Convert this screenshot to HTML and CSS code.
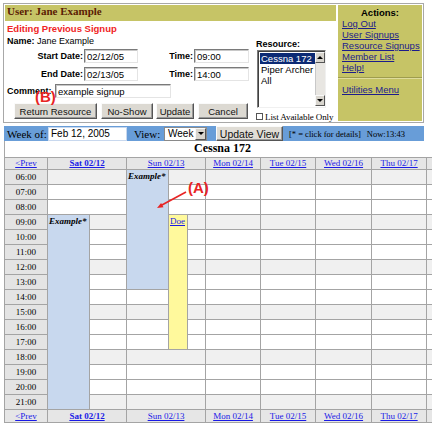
FILE: index.html
```html
<!DOCTYPE html>
<html>
<head>
<meta charset="utf-8">
<title>Editing Previous Signup</title>
<link rel="stylesheet" href="styles.css">
</head>
<body>
<div class="page">
  <div class="top">
    <div class="main">
      <div class="user-bar">User: Jane Example</div>
      <div class="editing">Editing Previous Signup</div>
      <div class="form-area">
        <div class="fields">
          <div class="name-row"><b>Name:</b> Jane Example</div>
          <div class="row row-start">
            <span class="lbl lbl-date">Start Date:</span><input class="field w-date" type="text" value="02/12/05">
            <span class="lbl lbl-time">Time:</span><input class="field w-time" type="text" value="09:00">
          </div>
          <div class="row row-end">
            <span class="lbl lbl-date">End Date:</span><input class="field w-date" type="text" value="02/13/05">
            <span class="lbl lbl-time">Time:</span><input class="field w-time" type="text" value="14:00">
          </div>
          <div class="row row-comment">
            <span class="lbl lbl-comment">Comment:</span><input class="field w-comment" type="text" value="example signup">
          </div>
          <div class="buttons">
            <button class="btn b-return">Return Resource</button>
            <button class="btn b-noshow">No-Show</button>
            <button class="btn b-update">Update</button>
            <button class="btn b-cancel">Cancel</button>
          </div>
        </div>
        <div class="resource">
          <div class="res-label">Resource:</div>
          <div class="listbox">
            <div class="items">
              <div class="item selected">Cessna 172</div>
              <div class="item">Piper Archer</div>
              <div class="item">All</div>
            </div>
            <div class="scrollbar">
              <div class="sb-btn"><span class="arrow-up"></span></div>
              <div class="sb-track"></div>
              <div class="sb-btn"><span class="arrow-down"></span></div>
            </div>
          </div>
          <div class="avail"><span class="checkbox"></span><span class="avail-text">List Available Only</span></div>
        </div>
      </div>
    </div>
    <div class="actions">
      <div class="act-title">Actions:</div>
      <a href="#" class="act-link">Log Out</a>
      <a href="#" class="act-link">User Signups</a>
      <a href="#" class="act-link">Resource Signups</a>
      <a href="#" class="act-link">Member List</a>
      <a href="#" class="act-link">Help!</a>
      <div class="sep"></div>
      <a href="#" class="act-link">Utilities Menu</a>
    </div>
  </div>

  <div class="week-bar">
    <span class="wk-label">Week of:</span><input class="wk-input" type="text" value="Feb 12, 2005">
    <span class="view-label">View:</span>
    <span class="select"><span class="select-text">Week</span><span class="select-btn"><span class="arrow-down"></span></span></span>
    <button class="btn btn-view">Update View</button>
    <span class="hint">[* = click for details]</span>
    <span class="now">Now:13:43</span>
  </div>

  <div class="sched">
    <div class="sched-title">Cessna 172</div>
    <table class="grid">
      <colgroup>
        <col class="w42"><col class="w41"><col class="w36"><col class="w41"><col class="w18"><col class="w17"><col class="w54"><col class="w54"><col class="w55"><col class="w54"><col class="w54">
      </colgroup>
      <tr class="hdr">
        <td><a href="#">&lt;Prev</a></td>
        <td colspan="2"><a href="#" class="today">Sat 02/12</a></td>
        <td colspan="3"><a href="#">Sun 02/13</a></td>
        <td><a href="#">Mon 02/14</a></td>
        <td><a href="#">Tue 02/15</a></td>
        <td><a href="#">Wed 02/16</a></td>
        <td><a href="#">Thu 02/17</a></td>
        <td></td>
      </tr>
      <tr class="g">
        <td class="t">06:00</td><td colspan="2"></td>
        <td class="ev-blue" rowspan="8">Example*</td><td colspan="2"></td>
        <td></td><td></td><td></td><td></td><td></td>
      </tr>
      <tr>
        <td class="t">07:00</td><td colspan="2"></td><td colspan="2"></td>
        <td></td><td></td><td></td><td></td><td></td>
      </tr>
      <tr>
        <td class="t">08:00</td><td colspan="2"></td><td colspan="2"></td>
        <td></td><td></td><td></td><td></td><td></td>
      </tr>
      <tr class="g">
        <td class="t">09:00</td>
        <td class="ev-blue" rowspan="13">Example*</td><td></td>
        <td class="ev-yellow" rowspan="9"><a href="#">Doe</a></td><td></td>
        <td></td><td></td><td></td><td></td><td></td>
      </tr>
      <tr>
        <td class="t">10:00</td><td></td><td></td>
        <td></td><td></td><td></td><td></td><td></td>
      </tr>
      <tr>
        <td class="t">11:00</td><td></td><td></td>
        <td></td><td></td><td></td><td></td><td></td>
      </tr>
      <tr class="g">
        <td class="t">12:00</td><td></td><td></td>
        <td></td><td></td><td></td><td></td><td></td>
      </tr>
      <tr>
        <td class="t">13:00</td><td></td><td></td>
        <td></td><td></td><td></td><td></td><td></td>
      </tr>
      <tr>
        <td class="t">14:00</td><td></td><td></td><td></td>
        <td></td><td></td><td></td><td></td><td></td>
      </tr>
      <tr class="g">
        <td class="t">15:00</td><td></td><td></td><td></td>
        <td></td><td></td><td></td><td></td><td></td>
      </tr>
      <tr>
        <td class="t">16:00</td><td></td><td></td><td></td>
        <td></td><td></td><td></td><td></td><td></td>
      </tr>
      <tr>
        <td class="t">17:00</td><td></td><td></td><td></td>
        <td></td><td></td><td></td><td></td><td></td>
      </tr>
      <tr class="g">
        <td class="t">18:00</td><td></td><td colspan="3"></td>
        <td></td><td></td><td></td><td></td><td></td>
      </tr>
      <tr>
        <td class="t">19:00</td><td></td><td colspan="3"></td>
        <td></td><td></td><td></td><td></td><td></td>
      </tr>
      <tr>
        <td class="t">20:00</td><td></td><td colspan="3"></td>
        <td></td><td></td><td></td><td></td><td></td>
      </tr>
      <tr class="g">
        <td class="t">21:00</td><td></td><td colspan="3"></td>
        <td></td><td></td><td></td><td></td><td></td>
      </tr>
      <tr class="ftr">
        <td><a href="#">&lt;Prev</a></td>
        <td colspan="2"><a href="#" class="today">Sat 02/12</a></td>
        <td colspan="3"><a href="#">Sun 02/13</a></td>
        <td><a href="#">Mon 02/14</a></td>
        <td><a href="#">Tue 02/15</a></td>
        <td><a href="#">Wed 02/16</a></td>
        <td><a href="#">Thu 02/17</a></td>
        <td></td>
      </tr>
    </table>
  </div>

  <span class="callout callout-a">(A)</span>
  <svg class="callout-arrow" width="40" height="28" viewBox="0 0 40 28">
    <line x1="36" y1="7" x2="11" y2="20.5" stroke="#e82424" stroke-width="1.6"/>
    <polygon points="7,23 13.5,22.3 11.1,17.9" fill="#e82424"/>
  </svg>
  <span class="callout callout-b">(B)</span>
</div>
</body>
</html>
```

FILE: styles.css
```css
html, body {
  margin: 0;
  padding: 0;
  overflow: hidden;
  background: #fff;
}
body {
  font-family: "Liberation Sans", Arial, sans-serif;
  font-size: 9px;
  color: #000;
}
.page {
  position: relative;
  width: 432px;
  height: 433px;
  overflow: hidden;
}

/* ---------- top panel ---------- */
.top {
  margin: 3px 0 0 3px;
  width: 417px;
  height: 116px;
  border: 1px solid #a8a8a8;
  padding: 1px;
  display: flex;
  gap: 2px;
}
.main {
  width: 331px;
}
.user-bar {
  height: 16px;
  line-height: 16px;
  background: #c6c466;
  color: #5a1c04;
  font: bold 11px "Liberation Serif", serif;
  padding-left: 2px;
}
.editing {
  color: #f02424;
  font-weight: bold;
  font-size: 9.5px;
  line-height: 12px;
  margin-top: 2px;
  padding-left: 2px;
}
.form-area {
  display: flex;
}
.fields {
  width: 251px;
}
.name-row {
  height: 12px;
  line-height: 12px;
  padding-left: 2px;
}
.row {
  display: flex;
  align-items: center;
  height: 14px;
}
.row-start { margin-top: 2px; }
.row-end { margin-top: 4px; }
.row-comment { margin-top: 3px; }
.lbl {
  font-weight: bold;
  white-space: nowrap;
}
.lbl-date {
  width: 78px;
  padding-right: 1px;
  text-align: right;
}
.lbl-time {
  width: 55px;
  padding-right: 1px;
  text-align: right;
}
.lbl-comment {
  width: 48px;
  padding-left: 2px;
}
.field {
  box-sizing: border-box;
  height: 14px;
  margin: 0;
  padding: 0 2px;
  font: 9.5px "Liberation Sans", Arial, sans-serif;
  color: #000;
  background: #fff;
  border: 1px solid;
  border-color: #7a7a7a #e4e4e4 #e4e4e4 #7a7a7a;
  box-shadow: inset 1px 1px 0 #c8c8c8;
  outline: none;
}
.w-date { width: 54px; }
.w-time { width: 55px; }
.w-comment { width: 116px; }

.buttons {
  display: flex;
  margin-top: 5px;
  padding-left: 9px;
}
.btn {
  box-sizing: border-box;
  height: 16px;
  margin: 0;
  padding: 0;
  font: 9.5px "Liberation Sans", Arial, sans-serif;
  color: #111;
  background: #dcd9d2;
  border: 1px solid;
  border-color: #fafafa #555 #555 #fafafa;
  box-shadow: inset -1px -1px 0 #9a9a9a;
}
.b-return { width: 83px; }
.b-noshow { width: 52px; margin-left: 4px; }
.b-update { width: 38px; margin-left: 3px; }
.b-cancel { width: 50px; margin-left: 4px; }

/* resource picker */
.resource {
  width: 80px;
}
.res-label {
  font-weight: bold;
  line-height: 12px;
  margin-top: 3px;
}
.listbox {
  box-sizing: border-box;
  display: flex;
  width: 69px;
  height: 58px;
  margin-left: 1px;
  background: #fff;
  border: 1px solid;
  border-color: #7a7a7a #f0f0f0 #f0f0f0 #7a7a7a;
  box-shadow: inset 1px 1px 0 #404040;
  padding: 2px 0 1px 2px;
}
.items {
  flex: 1;
  font-size: 9.5px;
}
.item {
  line-height: 11px;
  padding-left: 1px;
  white-space: nowrap;
}
.item.selected {
  background: #0c2a74;
  color: #fff;
}
.scrollbar {
  width: 10px;
  display: flex;
  flex-direction: column;
  margin-top: -1px;
}
.sb-btn {
  box-sizing: border-box;
  height: 11px;
  background: #d8d5ce;
  border: 1px solid;
  border-color: #f8f8f8 #555 #555 #f8f8f8;
  display: flex;
  align-items: center;
  justify-content: center;
}
.sb-track {
  flex: 1;
  background: #e8e6e2;
  border-left: 1px solid #c8c8c8;
}
.arrow-up, .arrow-down {
  width: 0;
  height: 0;
  border-left: 3px solid transparent;
  border-right: 3px solid transparent;
}
.arrow-up { border-bottom: 3px solid #000; }
.arrow-down { border-top: 3px solid #000; }
.avail {
  display: flex;
  align-items: center;
  margin-top: 4px;
  height: 9px;
  white-space: nowrap;
}
.checkbox {
  box-sizing: border-box;
  width: 7px;
  height: 7px;
  border: 1px solid #555;
  background: #fff;
  margin-right: 2px;
}
.avail-text {
  font: 9px "Liberation Serif", serif;
  letter-spacing: -0.1px;
}

/* actions */
.actions {
  width: 84px;
  background: #c6c466;
  padding-top: 2px;
  line-height: 11px;
  font-size: 9.5px;
}
.act-title {
  font-weight: bold;
  text-align: center;
}
.act-link {
  display: block;
  padding-left: 4px;
  color: #1c1c8c;
  text-decoration: underline;
  white-space: nowrap;
}
.sep {
  margin: 4px 0 5px;
  border-top: 1px solid #9e9c4e;
  border-bottom: 1px solid #dedc9c;
}

/* ---------- week bar ---------- */
.week-bar {
  display: flex;
  align-items: center;
  margin: 3px 0 0 4px;
  width: 420px;
  height: 15px;
  background: #689dd8;
  font: 11px "Liberation Serif", serif;
  white-space: nowrap;
}
.wk-label {
  box-sizing: border-box;
  width: 44px;
  padding-left: 3px;
}
.wk-input {
  box-sizing: border-box;
  width: 79px;
  height: 14px;
  margin: 0;
  padding: 0 2px;
  border: 1px solid #c8d8ee;
  background: #fff;
  font: 10px "Liberation Sans", Arial, sans-serif;
  color: #000;
  outline: none;
}
.view-label {
  width: 30px;
  margin-left: 7px;
}
.select {
  box-sizing: border-box;
  display: flex;
  align-items: center;
  width: 43px;
  height: 14px;
  background: #fff;
  border: 1px solid #8a8a8a;
  font: 10px "Liberation Sans", Arial, sans-serif;
}
.select-text {
  flex: 1;
  padding-left: 3px;
}
.select-btn {
  box-sizing: border-box;
  width: 11px;
  height: 12px;
  background: #d8d5ce;
  border: 1px solid;
  border-color: #f8f8f8 #555 #555 #f8f8f8;
  display: flex;
  align-items: center;
  justify-content: center;
}
.btn-view {
  width: 67px;
  height: 15px;
  margin-left: 9px;
  font-size: 10.5px;
  background: #e0ddd6;
}
.hint {
  margin-left: 6px;
  font-size: 8.5px;
}
.now {
  margin-left: 6px;
  font-size: 8.5px;
}

/* ---------- schedule ---------- */
.sched {
  margin-left: 4px;
}
.sched-title {
  width: 435px;
  height: 16px;
  line-height: 17px;
  border-left: 1px solid #a8a8a8;
  text-align: center;
  font: bold 12px "Liberation Serif", serif;
}
.grid {
  table-layout: fixed;
  width: 478px;
  border-spacing: 1px;
  background: #a4a4a4;
  font: 9px "Liberation Serif", serif;
}
.w42 { width: 42px; }
.w41 { width: 41px; }
.w36 { width: 36px; }
.w18 { width: 18px; }
.w17 { width: 17px; }
.w54 { width: 54px; }
.w55 { width: 55px; }
.grid td {
  padding: 0;
  height: 14px;
  line-height: 14px;
  background: #fff;
  overflow: hidden;
  white-space: nowrap;
  vertical-align: middle;
}
.grid tr.g td {
  background: #f0f0f0;
}
.grid tr td.t {
  background: #e4e4e4;
  text-align: center;
}
.grid tr.hdr td,
.grid tr.ftr td {
  background: #e6e6e6;
  text-align: center;
  height: 11px;
  line-height: 11px;
}
.grid tr.ftr td {
  height: 12px;
  line-height: 12px;
}
.grid a {
  color: #1a1ae6;
  text-decoration: underline;
}
.grid a.today {
  font-weight: bold;
}
.grid tr td.ev-blue {
  background: #c8d8ee;
  vertical-align: top;
  font-weight: bold;
  font-style: italic;
  padding-left: 1px;
  line-height: 12px;
}
.grid tr td.ev-yellow {
  background: #fff99c;
  vertical-align: top;
  line-height: 12px;
  padding-left: 1px;
}

/* ---------- annotations ---------- */
.callout {
  position: absolute;
  color: #e82424;
  font: bold 15px "Liberation Sans", Arial, sans-serif;
  line-height: 16px;
}
.callout-a {
  left: 188px;
  top: 180px;
}
.callout-b {
  left: 35px;
  top: 89px;
}
.callout-arrow {
  position: absolute;
  left: 150px;
  top: 185px;
}
```
